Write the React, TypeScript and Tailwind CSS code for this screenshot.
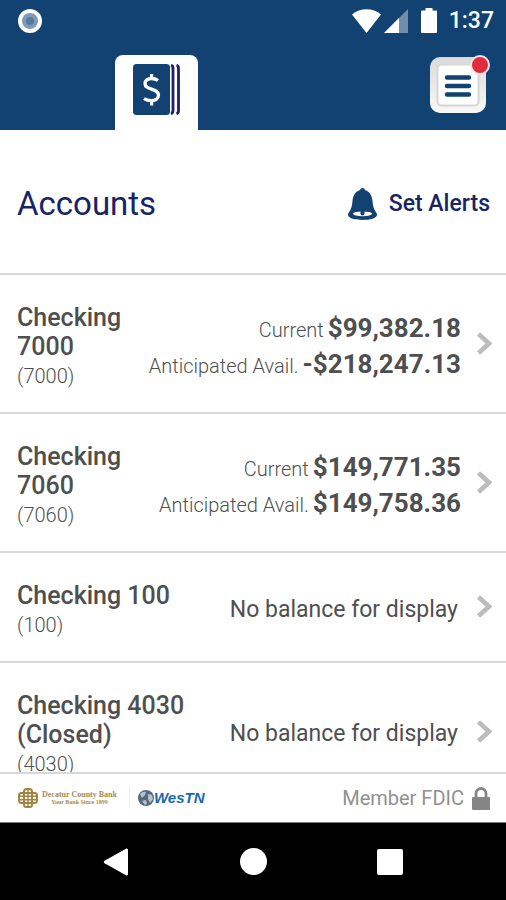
import React from 'react';

interface Balance {
  label: string;
  amount: string;
}

interface Account {
  name: string;
  number: string;
  balances: Balance[];
}

const ACCOUNTS: Account[] = [
  {
    name: 'Checking 7000',
    number: '7000',
    balances: [
      { label: 'Current', amount: '$99,382.18' },
      { label: 'Anticipated Avail.', amount: '-$218,247.13' },
    ],
  },
  {
    name: 'Checking 7060',
    number: '7060',
    balances: [
      { label: 'Current', amount: '$149,771.35' },
      { label: 'Anticipated Avail.', amount: '$149,758.36' },
    ],
  },
  { name: 'Checking 100', number: '100', balances: [] },
  { name: 'Checking 4030 (Closed)', number: '4030', balances: [] },
];

function StatusBar() {
  return (
    <div className="flex h-[41px] shrink-0 items-center justify-between pl-[18px] pr-3">
      <svg className="h-6 w-6" viewBox="0 0 24 24">
        <circle cx="12" cy="12" r="12" fill="#fff" />
        <circle cx="12" cy="12" r="8" fill="#7e9ab5" />
        <circle cx="12" cy="12" r="4" fill="#567a9c" />
      </svg>
      <div className="flex items-center">
        <svg className="h-6 w-[29px]" viewBox="0 0 29 24" fill="#fff">
          <path d="M0 5.5C8-1.600 21-1.600 29 5.500L14.500 24z" />
        </svg>
        <svg className="ml-[3px] h-6 w-6" viewBox="0 0 24 24" fill="#fff">
          <path d="M24 0v24H0z" fillOpacity="0.4" />
          <path d="M15 9v15H0z" />
        </svg>
        <svg className="ml-[13px] h-[25px] w-4" viewBox="0 0 16 25" fill="#fff">
          <path d="M4.500 0h7v2.500H15a1 1 0 0 1 1 1V24a1 1 0 0 1-1 1H1a1 1 0 0 1-1-1V3.500a1 1 0 0 1 1-1h3.500z" />
        </svg>
        <span className="ml-3 text-[23px]/[29px] font-medium text-white">1:37</span>
      </div>
    </div>
  );
}

function Header() {
  return (
    <div className="flex h-[89px] items-end justify-between pl-[115px] pr-5">
      <button
        aria-label="Accounts"
        className="flex h-[75px] w-[83px] justify-center rounded-t-lg bg-white pt-[9px]"
      >
        <svg className="h-[51px] w-[47px]" viewBox="0 0 47 51">
          <rect width="37" height="51" rx="3.500" fill="#124272" />
          <path
            d="M38 1.200c1.600.5 2 1.600 2 3.200v42.200c0 1.600-.4 2.700-2 3.200M43.500 1.200c1.600.5 2 1.600 2 3.200v42.200c0 1.600-.4 2.700-2 3.200"
            fill="none"
            stroke="#221f66"
            strokeWidth="2.800"
          />
          <path
            d="M25 16.500c-2-1.500-4-2-6.300-2-4 0-6.700 2-6.700 5.200 0 6.600 13.500 4.300 13.500 11.300 0 3.500-3 5.700-7.300 5.700-2.700 0-5-.6-7.200-2M18.600 10V14.500M18.600 37v4.500"
            fill="none"
            stroke="#fff"
            strokeWidth="3.300"
          />
        </svg>
      </button>
      <button aria-label="Menu" className="relative mb-[17px] h-14 w-14">
        <svg className="h-14 w-14" viewBox="0 0 56 56">
          <defs>
            <linearGradient id="bezel" x1="0" y1="0" x2="0" y2="1">
              <stop offset="0" stopColor="#dadad9" />
              <stop offset="1" stopColor="#f8f8f7" />
            </linearGradient>
          </defs>
          <rect width="56" height="56" rx="10" fill="url(#bezel)" />
          <rect x="7.500" y="7.500" width="41" height="41" rx="4" fill="#fff" stroke="#d6d6d4" strokeWidth="2" />
          <path d="M17 20.500h22M17 29h22M17 37.500h22" stroke="#124272" strokeWidth="4.400" strokeLinecap="round" />
        </svg>
        <span className="absolute -right-1 -top-0.5 h-5 w-5 rounded-full border-2 border-[#f6e4e6] bg-[#e02c3c]" />
      </button>
    </div>
  );
}

function AccountRow({ account }: { account: Account }) {
  return (
    <li className="border-b-2 border-[#d8d8d8]">
      <button className="flex w-full items-center pl-[17px] pr-[14px] text-left text-[#4f4f4f]">
        <div className="flex grow items-center justify-between pb-5 pt-7">
          <div className={account.balances.length ? 'w-[120px]' : 'w-[180px]'}>
            <div className="text-[25px]/[29px] font-medium">{account.name}</div>
            <div className="text-xl/[31px] font-light">({account.number})</div>
          </div>
          {account.balances.length ? (
            <div className="whitespace-nowrap pb-1">
              {account.balances.map((b) => (
                <div key={b.label} className="flex items-baseline justify-end gap-1">
                  <span className="text-xl/[24px] font-light">{b.label}</span>
                  <span className="text-[26px]/[36px] font-bold">{b.amount}</span>
                </div>
              ))}
            </div>
          ) : (
            <div className="whitespace-nowrap pb-1 pr-[3px] text-[23px]/[29px]">No balance for display</div>
          )}
        </div>
        <svg className="ml-4 h-6 w-[15px] shrink-0" viewBox="0 0 15 24" fill="none" stroke="#bcbcbc" strokeWidth="4.600">
          <path d="M1.500 2 12 11.500 1.500 21" />
        </svg>
      </button>
    </li>
  );
}

function BankLogos() {
  return (
    <div className="flex items-center">
      <svg className="h-5 w-5" viewBox="0 0 20 20" fill="none" stroke="#a3843f">
        <rect x="6" y="1" width="8" height="18" rx="2.500" strokeWidth="2" />
        <rect x="1" y="5" width="18" height="10" rx="2.500" strokeWidth="2" />
        <path d="M2 8.300h16M2 11.700h16M10 1v18" strokeWidth="1.500" />
      </svg>
      <div className="ml-1 text-center font-['Liberation_Serif'] font-bold text-[#a58a50]">
        <div className="text-[8px]/[9px]">Decatur County Bank</div>
        <div className="text-[6px]/[7px]">Your Bank Since 1899</div>
      </div>
      <div className="ml-3 h-5 w-px bg-[#ececec]" />
      <svg className="ml-2 h-4 w-4" viewBox="0 0 16 16">
        <circle cx="8" cy="8" r="8" fill="#56687c" />
        <path d="M2 4c2-2 4-2.500 6-2L7 5 4 8zM10 4l4 1 1 4-3 4-2-4zM4 11l4-1 1 4-2 1z" fill="#b4c3d2" />
      </svg>
      <span className="font-['Liberation_Sans'] text-[15px]/[16px] font-bold italic text-[#1a66b0]">WesTN</span>
    </div>
  );
}

export default function App() {
  return (
    <div className="flex h-screen flex-col bg-white font-[Roboto,sans-serif]">
      <header className="shrink-0 bg-[#124272]">
        <StatusBar />
        <Header />
      </header>

      <main className="min-h-0 grow overflow-y-auto [scrollbar-width:none]">
        <div className="flex h-[145px] items-center justify-between border-b-2 border-[#d8d8d8] pl-[17px] pr-4 pt-[5px]">
          <h1 className="text-[33px] text-[#172564]">Accounts</h1>
          <button className="flex items-center gap-3 text-[23px] font-medium text-[#172564]">
            <svg className="h-8 w-[29px]" viewBox="0 0 29 32">
              <path
                d="M14.500 0c1.500 0 2.200.8 2.400 2 5 1.600 7.200 6 7.600 11 .4 5.200 1.400 7.800 3 10.500 1 1.400 1.500 2.300 1.500 3.300C29 30.300 22 32 14.500 32S0 30.300 0 26.800c0-1 .5-1.900 1.500-3.300C3.100 20.800 4.100 18.200 4.500 13c.4-5 2.600-9.400 7.600-11 .2-1.200.9-2 2.400-2z"
                fill="#124272"
              />
              <ellipse cx="14.500" cy="25.800" rx="9.500" ry="2.400" fill="#fff" />
              <path d="M12.500 22h4v3.500a2 2 0 0 1-4 0z" fill="#124272" />
            </svg>
            Set Alerts
          </button>
        </div>
        <ul>
          {ACCOUNTS.map((account) => (
            <AccountRow key={account.number} account={account} />
          ))}
        </ul>
      </main>

      <footer className="flex h-[50px] shrink-0 items-center justify-between border-t-2 border-[#d8d8d8] pl-[18px] pr-4">
        <BankLogos />
        <div className="flex items-center gap-2 text-xl text-[#919191]">
          Member FDIC
          <svg className="h-[23px] w-[18px]" viewBox="0 0 18 23">
            <path d="M4 11V6.500a5 5 0 0 1 10 0V11" fill="none" stroke="#858585" strokeWidth="2.800" />
            <rect y="10" width="18" height="13" rx="1" fill="#858585" />
          </svg>
        </div>
      </footer>

      <nav className="flex h-[78px] shrink-0 items-center justify-between border-t border-[#777] bg-black px-[103px]">
        <button aria-label="Back">
          <svg className="h-7 w-[26px]" viewBox="0 0 26 28" fill="#fff">
            <path d="M23 .8 1.500 12.800a1.400 1.400 0 0 0 0 2.400L23 27.200a1.300 1.300 0 0 0 2-1.200V2A1.300 1.300 0 0 0 23 .8z" />
          </svg>
        </button>
        <button aria-label="Home" className="h-[27px] w-[27px] rounded-full bg-white" />
        <button aria-label="Recent apps" className="h-[26px] w-[26px] rounded-xs bg-white" />
      </nav>
    </div>
  );
}
